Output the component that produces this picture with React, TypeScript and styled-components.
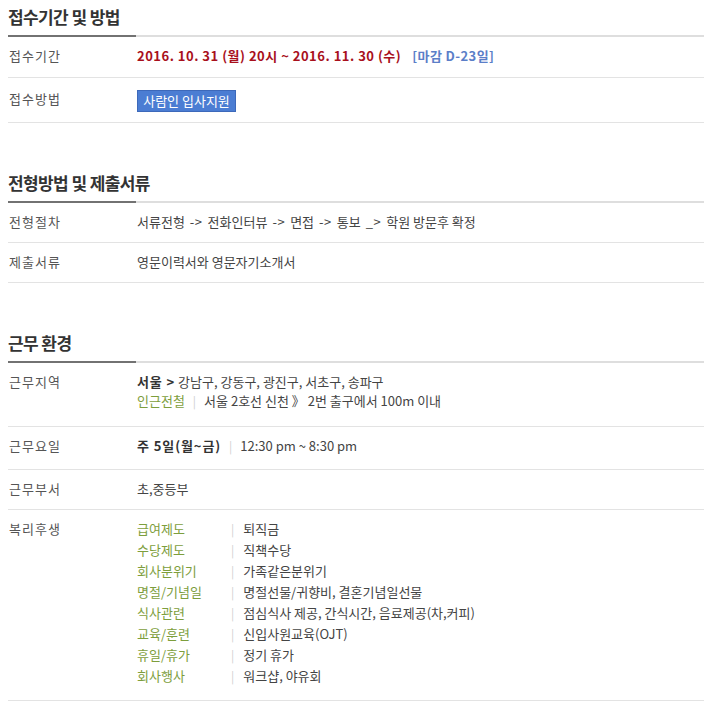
import React from "react";
import styled, { createGlobalStyle } from "styled-components";

const GlobalStyle = createGlobalStyle`
  body {
    margin: 8px;
    background: #fff;
    font-family: "Noto Sans CJK KR", "Noto Sans", sans-serif;
    color: #444;
  }
`;

interface Welfare {
  cat: string;
  val: string;
}

const welfare: Welfare[] = [
  { cat: "급여제도", val: "퇴직금" },
  { cat: "수당제도", val: "직책수당" },
  { cat: "회사분위기", val: "가족같은분위기" },
  { cat: "명절/기념일", val: "명절선물/귀향비, 결혼기념일선물" },
  { cat: "식사관련", val: "점심식사 제공, 간식시간, 음료제공(차,커피)" },
  { cat: "교육/훈련", val: "신입사원교육(OJT)" },
  { cat: "휴일/휴가", val: "정기 휴가" },
  { cat: "회사행사", val: "워크샵, 야유회" },
];

const steps = [
  { name: "서류전형", arrow: "->" },
  { name: "전화인터뷰", arrow: "->" },
  { name: "면접", arrow: "->" },
  { name: "통보", arrow: "_>" },
];

const App: React.FC = () => {
  return (
    <Page>
      <GlobalStyle />
      <Section>
        <SectionTitle>접수기간 및 방법</SectionTitle>
        <InfoList>
          <Row $bottom={12}>
            <Label>접수기간</Label>
            <Value>
              <Period>2016. 10. 31 (월) 20시 ~ 2016. 11. 30 (수)</Period>
              <Deadline>[마감 D-23일]</Deadline>
            </Value>
          </Row>
          <Row $top={12} $bottom={10}>
            <Label>접수방법</Label>
            <Value>
              <ApplyButton type="button">사람인 입사지원</ApplyButton>
            </Value>
          </Row>
        </InfoList>
      </Section>

      <Section>
        <SectionTitle>전형방법 및 제출서류</SectionTitle>
        <InfoList>
          <Row>
            <Label>전형절차</Label>
            <Value>
              {steps.map((s) => (
                <React.Fragment key={s.name}>
                  {s.name}
                  <Arrow>{s.arrow}</Arrow>
                </React.Fragment>
              ))}
              학원 방문후 확정
            </Value>
          </Row>
          <Row>
            <Label>제출서류</Label>
            <Value>영문이력서와 영문자기소개서</Value>
          </Row>
        </InfoList>
      </Section>

      <Section>
        <SectionTitle>근무 환경</SectionTitle>
        <InfoList>
          <Row $bottom={15}>
            <Label>근무지역</Label>
            <Value>
              <Line>
                <Strong>서울 &gt;</Strong> 강남구, 강동구, 광진구, 서초구, 송파구
              </Line>
              <Line>
                <Green>인근전철</Green>
                <Sep>|</Sep>
                서울 2호선 신천 》 2번 출구에서 100m 이내
              </Line>
            </Value>
          </Row>
          <Row $bottom={14}>
            <Label>근무요일</Label>
            <Value>
              <Strong>주 5일(월~금)</Strong>
              <Sep>|</Sep>
              12:30 pm ~ 8:30 pm
            </Value>
          </Row>
          <Row>
            <Label>근무부서</Label>
            <Value>초,중등부</Value>
          </Row>
          <Row $bottom={14}>
            <Label>복리후생</Label>
            <Value>
              <WelfareGrid>
                {welfare.map((w) => (
                  <React.Fragment key={w.cat}>
                    <WelfareCat>{w.cat}</WelfareCat>
                    <WelfareVal>
                      <Sep $tight>|</Sep>
                      {w.val}
                    </WelfareVal>
                  </React.Fragment>
                ))}
              </WelfareGrid>
            </Value>
          </Row>
        </InfoList>
      </Section>
    </Page>
  );
};

export default App;

const Page = styled.div`
  width: 697px;
`;

const Section = styled.section`
  & + & {
    margin-top: 51px;
  }
`;

const SectionTitle = styled.h2`
  margin: 0;
  padding-bottom: 11px;
  font-size: 17px;
  line-height: 18px;
  font-weight: 700;
  letter-spacing: -0.6px;
  color: #333;
  background: linear-gradient(to right, #727272 0 128px, #dedede 128px) left
    bottom / 100% 2px no-repeat;
`;

const InfoList = styled.dl`
  margin: 0;
`;

const Row = styled.div<{ $top?: number; $bottom?: number }>`
  display: flex;
  padding: ${(p) => p.$top ?? 10}px 0 ${(p) => p.$bottom ?? 11}px;
  border-bottom: 1px solid #e3e3e3;
  font-size: 13px;
  line-height: 18px;
`;

const Label = styled.dt`
  flex: 0 0 128px;
  padding-left: 1px;
  letter-spacing: 1px;
  color: #555;
`;

const Value = styled.dd`
  margin: 0;
  flex: 1;
  color: #444;
`;

const Line = styled.div`
  line-height: 20px;
  margin-top: -1px;
`;

const Arrow = styled.span`
  margin: 0 5px;
  letter-spacing: 0.5px;
`;

const Period = styled.span`
  color: #a8101c;
  font-weight: 700;
  letter-spacing: 0.5px;
`;

const Deadline = styled.span`
  margin-left: 11px;
  color: #5b7ec8;
  font-weight: 700;
  letter-spacing: 0.4px;
`;

const ApplyButton = styled.button`
  display: block;
  width: 99px;
  height: 22px;
  padding: 0;
  border: 1px solid #3d69ba;
  background: #4b7dd3;
  color: #fff;
  font-family: inherit;
  font-size: 13px;
  line-height: 20px;
  cursor: pointer;
`;

const Strong = styled.strong`
  color: #333;
  font-weight: 700;
  letter-spacing: 0.9px;
`;

const Green = styled.span`
  color: #7d9e3c;
`;

const Sep = styled.span<{ $tight?: boolean }>`
  margin: ${(p) => (p.$tight ? "0 9px 0 0" : "0 8px")};
  color: #d0d0d0;
  font-size: 12px;
  line-height: 0;
`;

const WelfareGrid = styled.div`
  display: grid;
  grid-template-columns: 94px auto;
  margin-top: -2px;
  line-height: 21px;
`;

const WelfareCat = styled.span`
  color: #7d9e3c;
`;

const WelfareVal = styled.span`
  color: #444;
`;
